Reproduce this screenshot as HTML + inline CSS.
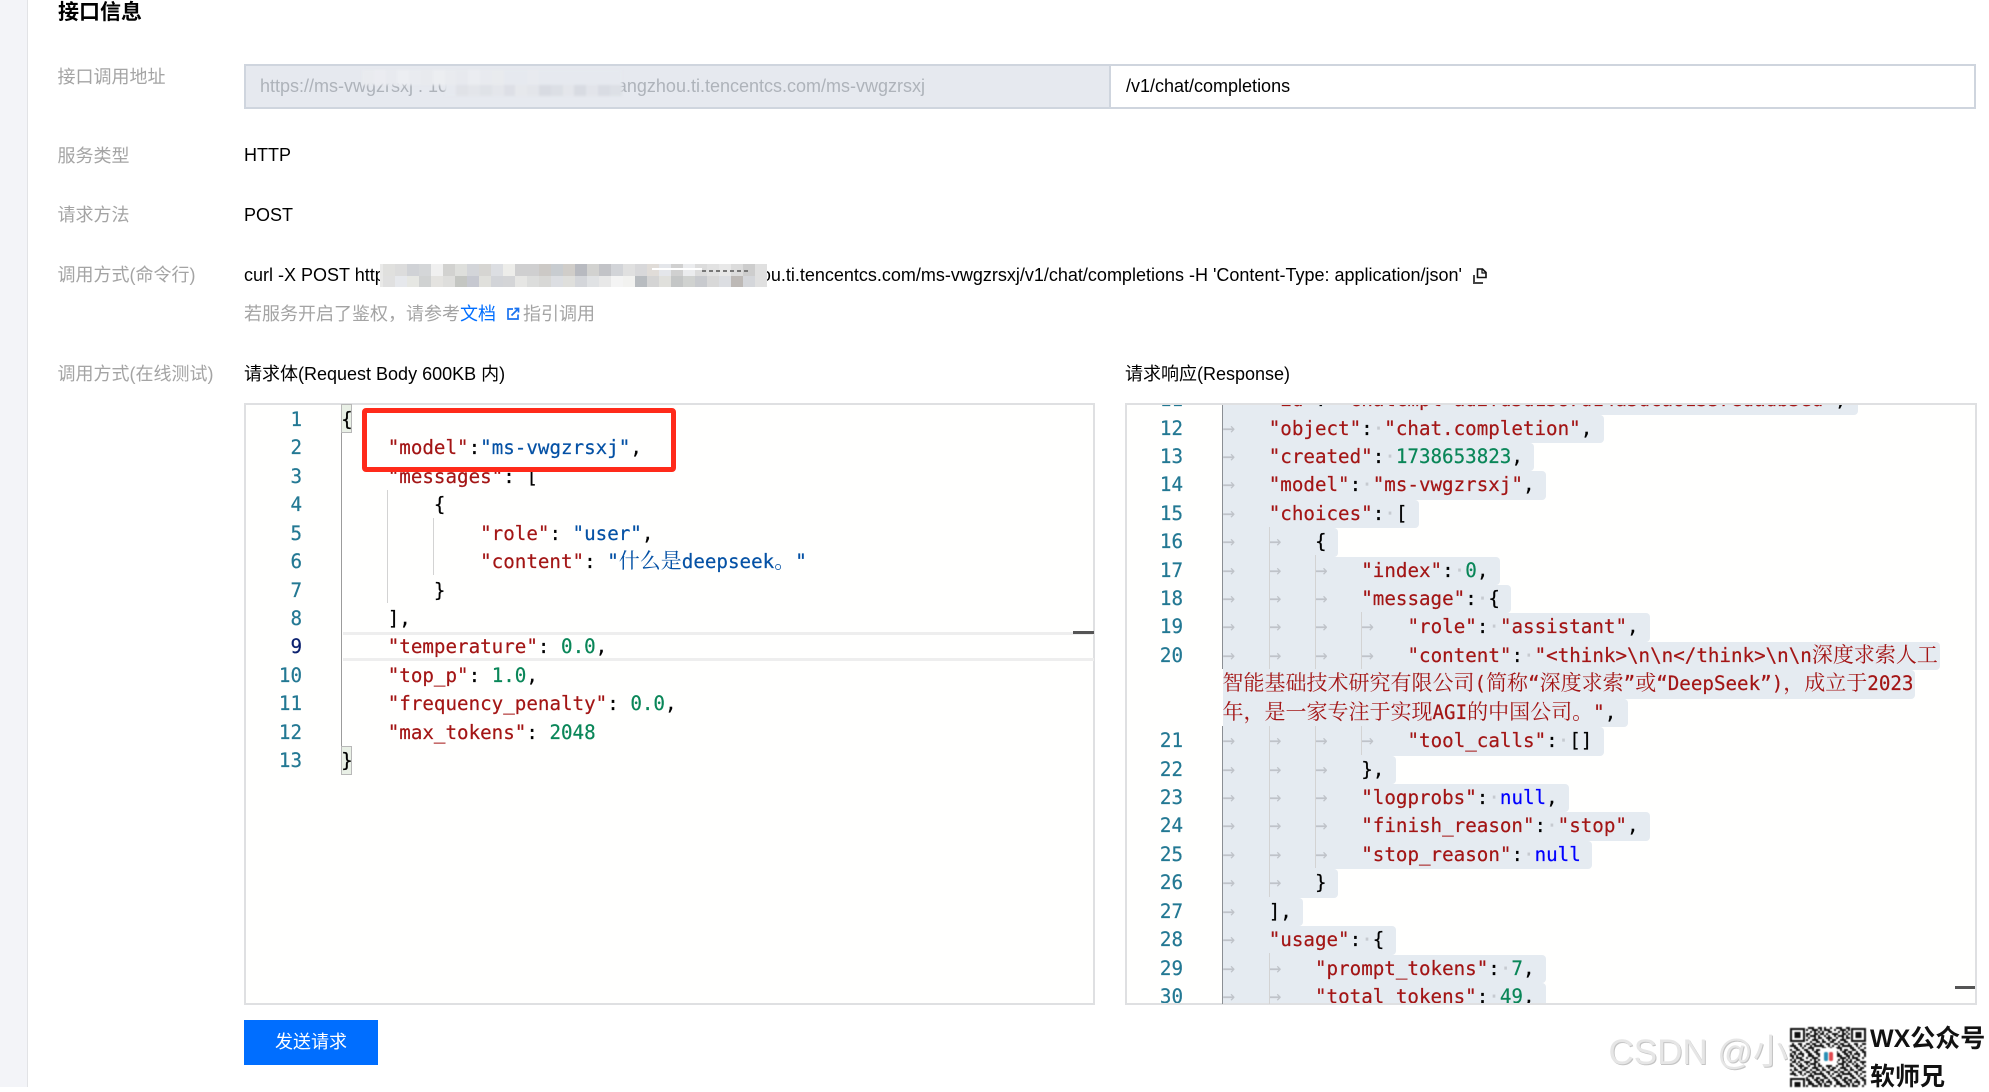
<!DOCTYPE html>
<html lang="zh"><head><meta charset="utf-8"><title>接口信息</title>
<style>
html,body{margin:0;padding:0;background:#fff}
body{position:relative;width:1989px;height:1087px;overflow:hidden;font-family:"Liberation Sans","Noto Sans CJK SC",sans-serif;font-size:18px;color:#000}
.a{position:absolute}
.t{position:absolute;line-height:24px;white-space:pre}
.lb{color:#a4a4a4;left:57.5px}
.strip{left:0;top:0;width:27px;height:1087px;background:#f3f4f8;border-right:1px solid #e2e3e6}
.ed{position:absolute;box-sizing:border-box;top:403px;height:602px;background:#fffffe;border:2px solid #dfe0e2}
.code{position:absolute;overflow:hidden;font-family:"DejaVu Sans Mono","Noto Serif CJK SC",monospace;font-size:19.2px;color:#000;white-space:pre;-webkit-text-stroke:.2px}
.l{height:28.43px;line-height:28.43px}
.k{color:#a31515}.v{color:#0451a5}.n{color:#098658}.u{color:#0000ff}
.d{color:#c6cad0}
.c{font-family:"Noto Serif CJK SC","Noto Sans CJK SC",serif;font-size:21px;font-weight:400;line-height:0;-webkit-text-stroke:0}
.s{display:inline-block;height:28.43px;background:#e5ebf1;border-radius:0 4px 4px 0;padding-right:11.5px;vertical-align:top}
.tb{display:inline-block;width:46.25px;color:#bfc3c9;font-size:21px;font-style:normal;text-indent:0;-webkit-text-stroke:0;line-height:0}
.nums{position:absolute;overflow:hidden;text-align:right;color:#237893;font-family:"DejaVu Sans Mono",monospace;font-size:19.2px;-webkit-text-stroke:.2px}
.g{position:absolute;width:1px;background:#d3d3d3}
.m{position:absolute;display:grid;grid-template-columns:repeat(32,12px);grid-auto-rows:11.5px}
.m i{display:block}
.m2{position:absolute;display:grid;grid-template-columns:repeat(22,11.8px);grid-template-rows:15px 11px;filter:blur(1px)}
.m2 i{display:block}
</style></head><body>

<div class="a strip"></div>
<div class="t" style="left:58px;top:1px;font-size:21px;font-weight:700">接口信息</div>

<div class="t lb" style="top:65px">接口调用地址</div>
<div class="a" style="left:244px;top:64px;width:866px;height:45px;box-sizing:border-box;background:#e6e9ef;border:2px solid #cfd5de;border-right:0"></div>
<div class="a" style="left:1109px;top:64px;width:867px;height:45px;box-sizing:border-box;background:#fff;border:2px solid #cfd5de"></div>
<div class="t" style="left:260px;top:74px;color:#aeb3ba">https://ms-vwgzrsxj . 10</div>
<div class="t" style="right:1064px;top:74px;color:#aeb3ba">angzhou.ti.tencentcs.com/ms-vwgzrsxj</div>
<div class="m2" style="left:362px;top:70px">
<i style="background:#e9ebef"></i><i style="background:#ebecf1"></i><i style="background:#e8eaef"></i><i style="background:#eceef2"></i><i style="background:#e9ebf0"></i><i style="background:#e8eaee"></i><i style="background:#eceef1"></i><i style="background:#e9ebef"></i><i style="background:#e7e9ee"></i><i style="background:#ebedf1"></i><i style="background:#e8eaef"></i><i style="background:#e9ebee"></i><i style="background:#e6e9ef"></i><i style="background:#e6e9ef"></i><i style="background:#e8eaef"></i><i style="background:#e6e9ef"></i><i style="background:#e6e9ef"></i><i style="background:#e6e9ef"></i><i style="background:#e6e9ef"></i><i style="background:#e6e9ef"></i><i style="background:#e6e9ef"></i><i style="background:#e6e9ef"></i>
<i style="background:#e6e9ef00"></i><i style="background:#e6e9ef00"></i><i style="background:#e6e9ef00"></i><i style="background:#e6e9ef00"></i><i style="background:#e6e9ef00"></i><i style="background:#e6e9ef00"></i><i style="background:#e6e9ef00"></i><i style="background:#e6e9ef"></i><i style="background:#e0e2e7"></i><i style="background:#e3e5ea"></i><i style="background:#dfe2e7"></i><i style="background:#e4e6eb"></i><i style="background:#dddfe6"></i><i style="background:#e6e8ec"></i><i style="background:#e3e5ea"></i><i style="background:#d8dbe2"></i><i style="background:#dcdfe5"></i><i style="background:#e4e6eb"></i><i style="background:#d8dbe2"></i><i style="background:#e2e4ea"></i><i style="background:#d9dce3"></i><i style="background:#dde0e6"></i>
</div>

<div class="t" style="left:1126px;top:74px">/v1/chat/completions</div>

<div class="t lb" style="top:144px">服务类型</div>
<div class="t" style="left:244px;top:143px">HTTP</div>
<div class="t lb" style="top:203px">请求方法</div>
<div class="t" style="left:244px;top:203px">POST</div>
<div class="t lb" style="top:263px">调用方式(命令行)</div>
<div class="t" style="left:244px;top:263px">curl -X POST http</div>
<div class="t" style="right:527px;top:263px">ou.ti.tencentcs.com/ms-vwgzrsxj/v1/chat/completions -H 'Content-Type: application/json'</div>

<div class="a" style="left:380px;top:264px;width:4px;height:23px;background:#e9e9e8"></div>
<div class="m" style="left:383px;top:264px">
<i style="background:#e0e0de"></i><i style="background:#dcdcdc"></i><i style="background:#d0d2d6"></i><i style="background:#d4d6d8"></i><i style="background:#f0f0f0"></i><i style="background:#d2d2d0"></i><i style="background:#dedfdc"></i><i style="background:#d3d5d9"></i><i style="background:#d6d5d2"></i><i style="background:#dcdee2"></i><i style="background:#ededea"></i><i style="background:#cfcfd0"></i><i style="background:#cfcfd0"></i><i style="background:#ccc9c6"></i><i style="background:#c8ccd0"></i><i style="background:#d0cdc9"></i><i style="background:#b8bac0"></i><i style="background:#d2d2d0"></i><i style="background:#c2c3c7"></i><i style="background:#d2d4d8"></i><i style="background:#e0e0e0"></i><i style="background:#d8d8da"></i><i style="background:#e0dcd8"></i><i style="background:#e4e6ea"></i><i style="background:#d0d0d0"></i><i style="background:#ebecee"></i><i style="background:#dcdcdc"></i><i style="background:#e2e2e2"></i><i style="background:#e8e8e8"></i><i style="background:#dcdcdc"></i><i style="background:#cdcdcd"></i><i style="background:#e0e0e0"></i>
<i style="background:#e0e0e0"></i><i style="background:#e6e8ec"></i><i style="background:#e6e7e3"></i><i style="background:#d0d2d2"></i><i style="background:#e4e3e0"></i><i style="background:#dededc"></i><i style="background:#c4c6c2"></i><i style="background:#c6c8d0"></i><i style="background:#e0e0dc"></i><i style="background:#d2d4d8"></i><i style="background:#d4d5d7"></i><i style="background:#e6e6e4"></i><i style="background:#dcdddc"></i><i style="background:#d8d8d6"></i><i style="background:#dcdee2"></i><i style="background:#dfdfdc"></i><i style="background:#d4d6da"></i><i style="background:#e0e2e4"></i><i style="background:#e8e8e8"></i><i style="background:#f4f4f4"></i><i style="background:#f2f2f0"></i><i style="background:#b8bcc0"></i><i style="background:#d4d4d4"></i><i style="background:#e0e0dc"></i><i style="background:#c4c6c6"></i><i style="background:#d0d2d0"></i><i style="background:#c8cace"></i><i style="background:#d8d8d8"></i><i style="background:#dcdee2"></i><i style="background:#bdb9b6"></i><i style="background:#d4d6da"></i><i style="background:#e0e0e0"></i>
</div>
<div class="a" style="left:652px;top:268px;width:50px;height:2px;background:#fff"></div>
<div class="a" style="left:702px;top:270px;width:46px;height:2px;background:repeating-linear-gradient(90deg,#777 0 4px,transparent 4px 7px)"></div>

<svg class="a" style="left:1471px;top:267px" width="18" height="18" viewBox="0 0 18 18" fill="none">
<path d="M6.5 2h5l3.5 3.5V10.5H6.5z" stroke="#111" stroke-width="1.6"/>
<path d="M11 2v4h4" stroke="#111" stroke-width="1.2"/>
<path d="M3 8v8h9" stroke="#444" stroke-width="2"/>
</svg>

<div class="t" style="left:244px;top:302px;color:#a4a4a4">若服务开启了鉴权，请参考</div>
<div class="t" style="left:460px;top:302px;color:#006eff">文档</div>
<svg class="a" style="left:505px;top:306px" width="16" height="16" viewBox="0 0 16 16" fill="none" stroke="#1a73f0" stroke-width="1.7">
<path d="M8 3H3v10h10V8.5"/><path d="M6.5 9.5L13 3M9.5 2.5h4v4"/>
</svg>
<div class="t" style="left:523px;top:302px;color:#a4a4a4">指引调用</div>

<div class="t lb" style="top:362px">调用方式(在线测试)</div>
<div class="t" style="left:244px;top:362px">请求体(Request Body 600KB 内)</div>
<div class="t" style="left:1125px;top:362px">请求响应(Response)</div>

<!-- left editor -->
<div class="ed" style="left:244px;width:851px"></div>
<div class="a" style="left:343px;top:632px;width:751px;height:29px;box-sizing:border-box;border-top:3px solid #eee;border-bottom:3px solid #eee"></div>
<div class="a" style="left:1073px;top:631px;width:21px;height:3px;background:#555"></div>
<div class="a" style="left:341px;top:405px;width:1px;height:368px;background:#9c9c9c"></div>
<div class="a" style="left:341px;top:404px;width:11px;height:29px;box-sizing:border-box;background:#e9f0e6;border:1px solid #b8b8b8"></div>
<div class="a" style="left:341px;top:746px;width:11px;height:29px;box-sizing:border-box;background:#e9f0e6;border:1px solid #b8b8b8"></div>
<div class="g" style="left:387px;top:490px;height:113px"></div>
<div class="g" style="left:433px;top:518px;height:57px"></div>

<div class="nums" style="left:260px;top:406px;width:42px;height:380px"><div class="l">1</div><div class="l">2</div><div class="l">3</div><div class="l">4</div><div class="l">5</div><div class="l">6</div><div class="l">7</div><div class="l">8</div><div class="l" style="color:#0b216f">9</div><div class="l">10</div><div class="l">11</div><div class="l">12</div><div class="l">13</div></div>

<div class="code" style="left:341.5px;top:406px;width:745px;height:380px"><div class="l"> <span style="margin-left:-12px">{</span></div><div class="l">    <span class="k">"model"</span>:<span class="v">"ms-vwgzrsxj"</span>,</div><div class="l">    <span class="k">"messages"</span>: [</div><div class="l">        {</div><div class="l">            <span class="k">"role"</span>: <span class="v">"user"</span>,</div><div class="l">            <span class="k">"content"</span>: <span class="v">"<span class="c">什么是</span>deepseek<span class="c">。</span>"</span></div><div class="l">        }</div><div class="l">    ],</div><div class="l">    <span class="k">"temperature"</span>: <span class="n">0.0</span>,</div><div class="l">    <span class="k">"top_p"</span>: <span class="n">1.0</span>,</div><div class="l">    <span class="k">"frequency_penalty"</span>: <span class="n">0.0</span>,</div><div class="l">    <span class="k">"max_tokens"</span>: <span class="n">2048</span></div><div class="l"> <span style="margin-left:-12px">}</span></div></div>

<div class="a" style="left:362px;top:408px;width:314px;height:64px;box-sizing:border-box;border:5px solid #ff2a1a;border-radius:4px"></div>

<!-- right editor -->
<div class="ed" style="left:1125px;width:852px"></div>
<div class="nums" style="left:1140px;top:405px;width:43px;height:598px"><div style="margin-top:-18.9px"><div class="l">11</div><div class="l">12</div><div class="l">13</div><div class="l">14</div><div class="l">15</div><div class="l">16</div><div class="l">17</div><div class="l">18</div><div class="l">19</div><div class="l">20</div><div class="l"></div><div class="l"></div><div class="l">21</div><div class="l">22</div><div class="l">23</div><div class="l">24</div><div class="l">25</div><div class="l">26</div><div class="l">27</div><div class="l">28</div><div class="l">29</div><div class="l">30</div></div></div>

<div class="code" style="left:1222.5px;top:405px;width:750px;height:598px"><div style="margin-top:-18.9px"><div class="l"><span class="s"><i class="tb">→</i><span class="k">"id"</span>:<span class="d">·</span><span class="k">"chatcmpl-ad2fd3d1387d14a3dca81337edadb3ed"</span>,</span></div><div class="l"><span class="s"><i class="tb">→</i><span class="k">"object"</span>:<span class="d">·</span><span class="k">"chat.completion"</span>,</span></div><div class="l"><span class="s"><i class="tb">→</i><span class="k">"created"</span>:<span class="d">·</span><span class="n">1738653823</span>,</span></div><div class="l"><span class="s"><i class="tb">→</i><span class="k">"model"</span>:<span class="d">·</span><span class="k">"ms-vwgzrsxj"</span>,</span></div><div class="l"><span class="s"><i class="tb">→</i><span class="k">"choices"</span>:<span class="d">·</span>[</span></div><div class="l"><span class="s"><i class="tb">→</i><i class="tb">→</i>{</span></div><div class="l"><span class="s"><i class="tb">→</i><i class="tb">→</i><i class="tb">→</i><span class="k">"index"</span>:<span class="d">·</span><span class="n">0</span>,</span></div><div class="l"><span class="s"><i class="tb">→</i><i class="tb">→</i><i class="tb">→</i><span class="k">"message"</span>:<span class="d">·</span>{</span></div><div class="l"><span class="s"><i class="tb">→</i><i class="tb">→</i><i class="tb">→</i><i class="tb">→</i><span class="k">"role"</span>:<span class="d">·</span><span class="k">"assistant"</span>,</span></div><div class="l"><span class="s" style="padding-right:2px"><i class="tb">→</i><i class="tb">→</i><i class="tb">→</i><i class="tb">→</i><span class="k">"content"</span>:<span class="d">·</span><span class="k">"&lt;think&gt;\n\n&lt;/think&gt;\n\n<span class="c">深度求索人工</span></span></span></div><div class="l"><span class="s k" style="padding-right:2px"><span class="c">智能基础技术研究有限公司</span>(<span class="c">简称</span>“<span class="c">深度求索</span>”<span class="c">或</span>“DeepSeek”)<span class="c">，成立于</span>2023</span></div><div class="l"><span class="s"><span class="k"><span class="c">年，是一家专注于实现</span>AGI<span class="c">的中国公司。</span>"</span>,</span></div><div class="l"><span class="s"><i class="tb">→</i><i class="tb">→</i><i class="tb">→</i><i class="tb">→</i><span class="k">"tool_calls"</span>:<span class="d">·</span>[]</span></div><div class="l"><span class="s"><i class="tb">→</i><i class="tb">→</i><i class="tb">→</i>},</span></div><div class="l"><span class="s"><i class="tb">→</i><i class="tb">→</i><i class="tb">→</i><span class="k">"logprobs"</span>:<span class="d">·</span><span class="u">null</span>,</span></div><div class="l"><span class="s"><i class="tb">→</i><i class="tb">→</i><i class="tb">→</i><span class="k">"finish_reason"</span>:<span class="d">·</span><span class="k">"stop"</span>,</span></div><div class="l"><span class="s"><i class="tb">→</i><i class="tb">→</i><i class="tb">→</i><span class="k">"stop_reason"</span>:<span class="d">·</span><span class="u">null</span></span></div><div class="l"><span class="s"><i class="tb">→</i><i class="tb">→</i>}</span></div><div class="l"><span class="s"><i class="tb">→</i>],</span></div><div class="l"><span class="s"><i class="tb">→</i><span class="k">"usage"</span>:<span class="d">·</span>{</span></div><div class="l"><span class="s"><i class="tb">→</i><i class="tb">→</i><span class="k">"prompt_tokens"</span>:<span class="d">·</span><span class="n">7</span>,</span></div><div class="l"><span class="s"><i class="tb">→</i><i class="tb">→</i><span class="k">"total_tokens"</span>:<span class="d">·</span><span class="n">49</span>,</span></div></div></div>

<!-- structural lines, right editor -->
<div class="a" style="left:1222px;top:405px;width:1px;height:264px;background:#8b8f94"></div>
<div class="a" style="left:1222px;top:726px;width:1px;height:278px;background:#8b8f94"></div>
<div class="g" style="left:1269px;top:527px;height:142px"></div>
<div class="g" style="left:1269px;top:726px;height:171px"></div>
<div class="g" style="left:1269px;top:953px;height:51px"></div>
<div class="g" style="left:1315px;top:555px;height:114px"></div>
<div class="g" style="left:1315px;top:726px;height:142px"></div>
<div class="g" style="left:1361px;top:612px;height:57px"></div>
<div class="g" style="left:1361px;top:726px;height:29px"></div>
<div class="a" style="left:1955px;top:986px;width:20px;height:3px;background:#555"></div>

<!-- button -->
<div class="a" style="left:244px;top:1020px;width:134px;height:45px;background:#006eff;color:#fff;text-align:center;line-height:45px">发送请求</div>

<!-- watermark -->
<div class="t" style="left:1608.5px;top:1033px;line-height:40px;font-size:35px;color:#e6e6e6;text-shadow:1px 1px 0 #c4c4c4">CSDN @小v</div>

<div class="a" style="left:1790px;top:1027px;width:76px;height:60px;background:#fff"></div>
<svg class="a" style="left:1790px;top:1027px;filter:blur(.45px)" width="76" height="60" viewBox="0 0 76 60">
<defs><pattern id="q" width="28" height="28" patternUnits="userSpaceOnUse">
<path stroke="#111" stroke-width="2" fill="none" d="M0 1h4M6 1h2M12 1h2M18 1h6M2 3h2M6 3h6M16 3h2M22 3h6M0 5h2M4 5h2M10 5h4M20 5h2M24 5h2M2 7h4M8 7h2M14 7h6M24 7h4M0 9h2M6 9h2M10 9h2M16 9h2M20 9h6M0 11h4M8 11h6M18 11h2M24 11h2M4 13h2M10 13h2M14 13h4M22 13h6M0 15h2M4 15h4M12 15h4M20 15h2M26 15h2M2 17h2M8 17h4M16 17h4M22 17h4M0 19h6M10 19h2M14 19h2M20 19h2M24 19h4M4 21h4M12 21h2M18 21h6M0 23h2M6 23h4M14 23h4M22 23h2M26 23h2M2 25h4M10 25h2M16 25h4M24 25h4M0 27h2M4 27h2M8 27h6M18 27h4M26 27h2"/>
</pattern></defs>
<rect width="76" height="60" fill="url(#q)"/>
<g><rect x="0" y="0" width="16" height="16" fill="#fff"/><path d="M1 2h13v12H1z" fill="none" stroke="#111" stroke-width="2"/><rect x="4.5" y="5" width="6" height="6" fill="#111"/></g>
<g><rect x="60" y="0" width="16" height="16" fill="#fff"/><path d="M62 2h13v12H62z" fill="none" stroke="#111" stroke-width="2"/><rect x="65.5" y="5" width="6" height="6" fill="#111"/></g>
<g><rect x="0" y="49" width="16" height="11" fill="#fff"/><path d="M1 52h13v12H1z" fill="none" stroke="#111" stroke-width="2"/><rect x="4.5" y="55" width="6" height="6" fill="#111"/></g>
<rect x="30" y="21" width="17" height="17" fill="#fff"/>
<rect x="34" y="25" width="4" height="9" rx="1.5" fill="#2a8fb5"/>
<rect x="39" y="25" width="4" height="9" rx="1.5" fill="#e0484f"/>
</svg>

<div class="t" style="left:1870px;top:1024px;line-height:30px;font-size:25px;font-weight:700;color:#111">WX公众号</div>
<div class="t" style="left:1870px;top:1062px;line-height:30px;font-size:25px;font-weight:700;color:#111">软师兄</div>

</body></html>
